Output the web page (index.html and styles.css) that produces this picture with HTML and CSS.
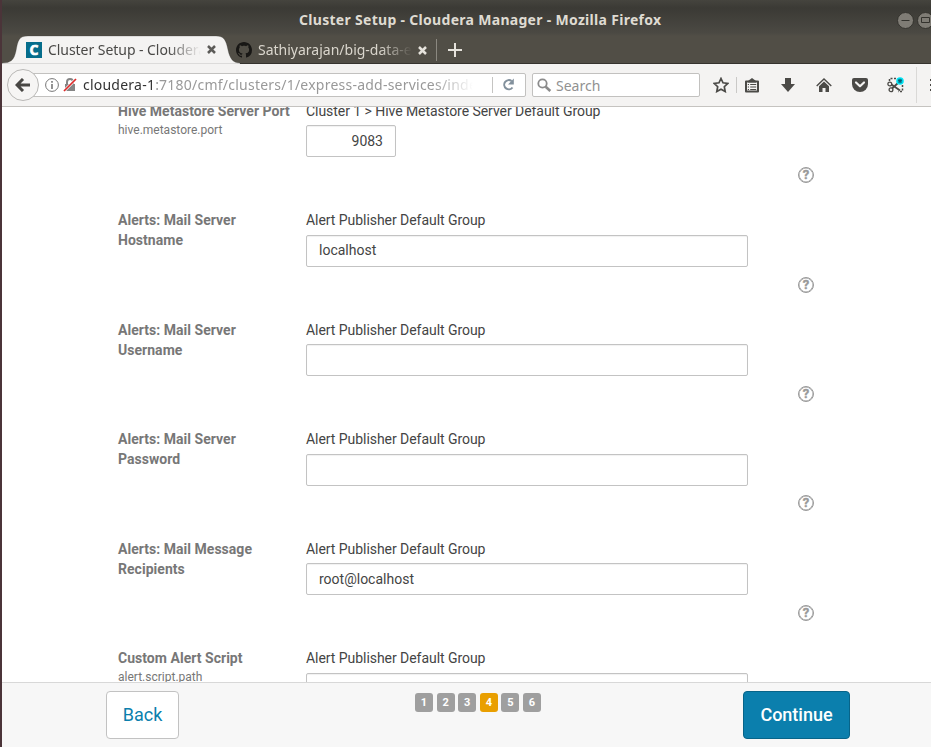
FILE: index.html
```html
<!DOCTYPE html>
<html lang="en">
<head>
<meta charset="utf-8">
<title>Cluster Setup - Cloudera Manager</title>
<link rel="stylesheet" href="styles.css">
</head>
<body>
<div class="window">
  <header class="chrome">
    <div class="titlebar">
      <span class="title">Cluster Setup - Cloudera Manager - Mozilla Firefox</span>
      <div class="controls">
        <svg width="17" height="17" viewBox="0 0 17 17"><circle cx="8.5" cy="8.5" r="8" fill="#7f7c75" stroke="#34332e"/><path d="M4.500 8.500h8" stroke="#34332e"/></svg>
        <svg width="17" height="17" viewBox="0 0 17 17"><circle cx="8.5" cy="8.5" r="8" fill="#7f7c75" stroke="#34332e"/><path d="M4.500 5.500h8v5h-8z" fill="none" stroke="#34332e"/></svg>
      </div>
    </div>
    <div class="tabs">
      <div class="tab active">
        <svg class="tab-shape" width="240" height="29" viewBox="0 0 240 29"><path d="M0 28C9 28 12 25 14 16C16 5 17 1 26 1H214C222 1 224 5 226 15C228 24 231 28 238 28V29H0Z" fill="#f4f3f2" stroke="#2e2d29" stroke-opacity=".4" stroke-width=".6"/></svg>
        <span class="favicon">C</span>
        <span class="tab-label first">Cluster Setup - Cloudera</span>
        <svg class="close" width="9" height="9" viewBox="0 0 9 9"><path d="M1 1l7 7M8 1l-7 7" stroke="#5c5b58" stroke-width="2.500"/></svg>
      </div>
      <div class="tab inactive">
        <svg width="16" height="16" viewBox="0 0 16 16"><path fill="#181715" d="M8 0C3.58 0 0 3.58 0 8c0 3.54 2.29 6.53 5.47 7.59.4.07.55-.17.55-.38 0-.19-.01-.82-.01-1.49-2.01.37-2.53-.49-2.69-.94-.09-.23-.48-.94-.82-1.13-.28-.15-.68-.52-.01-.53.63-.01 1.08.58 1.23.82.72 1.21 1.87.87 2.33.66.07-.52.28-.87.51-1.07-1.78-.2-3.64-.89-3.64-3.95 0-.87.31-1.59.82-2.15-.08-.2-.36-1.02.08-2.12 0 0 .67-.21 2.2.82.64-.18 1.32-.27 2-.27s1.36.09 2 .27c1.53-1.04 2.2-.82 2.2-.82.44 1.1.16 1.92.08 2.12.51.56.82 1.27.82 2.15 0 3.07-1.87 3.75-3.65 3.95.29.25.54.73.54 1.48 0 1.07-.01 1.93-.01 2.2 0 .21.15.46.55.38A8.01 8.01 0 0 0 16 8c0-4.42-3.58-8-8-8z"/></svg>
        <span class="tab-label second">Sathiyarajan/big-data-e</span>
        <svg class="close" width="9" height="9" viewBox="0 0 9 9"><path d="M1 1l7 7M8 1l-7 7" stroke="#e6e3dc" stroke-width="2.500"/></svg>
      </div>
      <svg class="new-tab" width="14" height="14" viewBox="0 0 14 14"><path d="M7 0v14M0 7h14" stroke="#e6e3dc" stroke-width="2"/></svg>
    </div>
    <div class="toolbar">
      <div class="back-circle"><svg width="16" height="14" viewBox="0 0 16 14"><path d="M15 7H3M8 1L2 7l6 6" fill="none" stroke="#484744" stroke-width="3"/></svg></div>
      <div class="url">
        <svg width="14" height="14" viewBox="0 0 14 14"><circle cx="7" cy="7" r="6.400" fill="none" stroke="#777"/><path d="M7 6v5M7 3v1.700" stroke="#777" stroke-width="1.600"/></svg>
        <svg class="lock" width="14" height="14" viewBox="0 0 14 14"><path d="M4 7V4a3 3 0 0 1 6 0v3" fill="none" stroke="#858585" stroke-width="2"/><path d="M2 6h10v7H2z" fill="#858585"/><path d="M1 13L13 1" stroke="#fff" stroke-width="3"/><path d="M1 13L13 1" stroke="#dc2b2b" stroke-width="1.700"/></svg>
        <span class="address"><b>cloudera-1</b>:7180/cmf/clusters/1/express-add-services/index</span>
        <span class="reload"><svg width="13" height="13" viewBox="0 0 13 13"><path d="M10.500 9.500A4.600 4.600 0 1 1 9.600 3" fill="none" stroke="#82909c" stroke-width="2"/><path d="M11.800.6v5.800H6z" fill="#82909c"/></svg></span>
      </div>
      <div class="search">
        <svg width="15" height="15" viewBox="0 0 15 15"><circle cx="5.500" cy="5.500" r="4.200" fill="none" stroke="#8b8b8b" stroke-width="1.800"/><path d="M8.700 8.700l4.600 4.300" stroke="#8b8b8b" stroke-width="2.600"/></svg>
        <span>Search</span>
      </div>
      <div class="tools">
        <svg width="16" height="16" viewBox="0 0 16 16"><path d="M8 1.500l2 4.300 4.800.6-3.500 3.300.9 4.800L8 12.200l-4.200 2.300.9-4.800L1.200 6.400l4.800-.6z" fill="none" stroke="#4b4a47" stroke-width="1.700"/></svg>
        <i class="tool-line"></i>
        <svg width="14" height="15" viewBox="0 0 14 15"><path d="M1 3.500h12v10H1z" fill="none" stroke="#4b4a47" stroke-width="2" stroke-linejoin="round"/><path d="M3 3L7 0l4 3v1.500H3z" fill="#4b4a47"/><path d="M2.800 6.500h1.200M5.200 6.500H11.200M2.800 9h1.200M5.200 9H11.200M2.800 11.500h1.200M5.200 11.500H11.200" stroke="#4b4a47" stroke-width="1.100"/></svg>
        <svg class="download" width="14" height="14" viewBox="0 0 14 14"><path d="M4 0h6v6h4l-7 8-7-8h4z" fill="#4b4a47"/></svg>
        <svg class="home" width="16" height="15" viewBox="0 0 16 15"><path d="M.7 8L8 1l7.300 7" fill="none" stroke="#4b4a47" stroke-width="1.400"/><path d="M3 8.200l5-4.700 5 4.700V14H9.500v-4h-3v4H3z" fill="#4b4a47"/></svg>
        <svg class="pocket" width="16" height="14" viewBox="0 0 16 14"><path d="M2 0h12q2 0 2 2v4a8 8 0 0 1-16 0V2q0-2 2-2z" fill="#4b4a47"/><path d="M4 4.500l4 3.700 4-3.700" fill="none" stroke="#f4f3f2" stroke-width="2.200" stroke-linecap="round" stroke-linejoin="round"/></svg>
        <svg class="scissors" width="17" height="16" viewBox="0 0 17 16"><path d="M2.500 4V1.500H10M15.500 8v6.500H11" fill="none" stroke="#4b4a47" stroke-width="1.500" stroke-dasharray="2 1.500"/><circle cx="2.800" cy="7" r="1.900" fill="none" stroke="#4b4a47" stroke-width="1.300"/><circle cx="4" cy="12.800" r="1.900" fill="none" stroke="#4b4a47" stroke-width="1.300"/><path d="M4.500 7.600L13 13.500M5 11.500L11 6" stroke="#4b4a47" stroke-width="1.800"/><circle cx="13" cy="4" r="3.800" fill="#00e5f5"/><path d="M13 1.700v4.600M11 2.900l4 2.200M15 2.900l-4 2.200" stroke="#075b70" stroke-width="1.200"/></svg>
        <i class="end-line"></i>
        <svg class="menu" width="14" height="14" viewBox="0 0 14 14"><path d="M0 2h14M0 7h14M0 12h14" stroke="#4b4a47" stroke-width="2"/></svg>
      </div>
    </div>
  </header>
  <main class="content">
    <section class="row">
      <div class="name"><strong>Hive Metastore Server Port</strong><small>hive.metastore.port</small></div>
      <div class="field"><label>Cluster 1 &gt; Hive Metastore Server Default Group</label><div class="input port">9083</div></div>
      <span class="help">?</span>
    </section>
    <section class="row">
      <div class="name"><strong>Alerts: Mail Server Hostname</strong></div>
      <div class="field"><label>Alert Publisher Default Group</label><div class="input">localhost</div></div>
      <span class="help">?</span>
    </section>
    <section class="row">
      <div class="name"><strong>Alerts: Mail Server Username</strong></div>
      <div class="field"><label>Alert Publisher Default Group</label><div class="input"></div></div>
      <span class="help">?</span>
    </section>
    <section class="row">
      <div class="name"><strong>Alerts: Mail Server Password</strong></div>
      <div class="field"><label>Alert Publisher Default Group</label><div class="input"></div></div>
      <span class="help">?</span>
    </section>
    <section class="row">
      <div class="name"><strong>Alerts: Mail Message Recipients</strong></div>
      <div class="field"><label>Alert Publisher Default Group</label><div class="input recipients">root@localhost</div></div>
      <span class="help">?</span>
    </section>
    <section class="row">
      <div class="name"><strong>Custom Alert Script</strong><small>alert.script.path</small></div>
      <div class="field"><label>Alert Publisher Default Group</label><div class="input"></div></div>
    </section>
  </main>
  <footer class="footer">
    <div class="button back">Back</div>
    <div class="steps"><span>1</span><span>2</span><span>3</span><span class="current">4</span><span>5</span><span>6</span></div>
    <div class="button continue">Continue</div>
  </footer>
</div>
</body>
</html>
```
FILE: styles.css
```css
* { box-sizing: border-box; }
body { margin: 0; background: #fff; font-family: Roboto, sans-serif; }
svg { display: block; flex: none; }
.window { width: 931px; height: 747px; display: flex; flex-direction: column; border-left: 2px solid #4b3439; overflow: hidden; }

.chrome { flex: none; height: 107px; background: linear-gradient(#45443e 0, #3b3a35 8px, #4b4943 33px, #514e46 36px); font-family: "Noto Sans", sans-serif; }
.titlebar { height: 35px; display: flex; align-items: center; padding: 5px 0 0 297px; }
.title { width: 364px; white-space: nowrap; font-size: 14px; line-height: 20px; font-weight: 700; letter-spacing: .3px; color: #dfdbd2; }
.controls { display: flex; gap: 3px; margin-left: 236px; flex: none; }

.tabs { height: 29px; display: flex; border-bottom: 1px solid #35332e; }
.tab { display: flex; align-items: center; flex: none; height: 29px; }
.active { width: 234px; padding-left: 24px; position: relative; }
.tab-shape { position: absolute; left: 0; top: 0; }
.active > :not(.tab-shape) { position: relative; }
.favicon { width: 16px; height: 16px; background: #066d8b; color: #fff; font: 700 14px/16px "Open Sans", sans-serif; text-align: center; -webkit-text-stroke: .7px #fff; }
.tab-label { overflow: hidden; white-space: nowrap; font-size: 14px; line-height: 20px; }
.first { width: 153px; margin-left: 6px; color: #4a4947; letter-spacing: -.05px; -webkit-mask-image: linear-gradient(90deg, #000 120px, transparent); mask-image: linear-gradient(90deg, #000 120px, transparent); }
.second { width: 154px; margin-left: 6px; color: #dad6cd; -webkit-mask-image: linear-gradient(90deg, #000 122px, transparent); mask-image: linear-gradient(90deg, #000 122px, transparent); }
.close { margin-left: 6px; }
.inactive { width: 201px; height: 22px; margin-top: 4px; border-right: 1px solid #8b8880; }
.new-tab { margin: 8px 0 0 11px; }

.toolbar { height: 43px; display: flex; align-items: center; background: #f4f3f2; border-bottom: 1px solid #c5c3c0; padding-left: 5px; }
.back-circle { z-index: 1; width: 32px; height: 32px; flex: none; border: 1px solid #b9b8b6; border-radius: 50%; background: #f6f5f4; display: flex; align-items: center; justify-content: center; }
.url { width: 494px; height: 24px; margin-left: -7px; padding-left: 12px; display: flex; align-items: center; flex: none; border: 1px solid #c2c1bf; border-radius: 2px; background: #fff; }
.lock { margin-left: 4px; }
.address { width: 398px; margin-left: 6px; overflow: hidden; white-space: nowrap; font-size: 14px; line-height: 20px; color: #999; letter-spacing: .23px; -webkit-mask-image: linear-gradient(90deg, #000 350px, transparent 390px); mask-image: linear-gradient(90deg, #000 350px, transparent 390px); }
.address b { font-weight: 400; color: #333; }
.reload { margin-left: 11px; height: 16px; border-left: 1px solid #c5c4c2; padding: 1px 0 0 9px; }
.search { width: 168px; height: 24px; margin-left: 6px; padding-left: 4px; display: flex; align-items: center; gap: 4px; flex: none; border: 1px solid #c2c1bf; border-radius: 2px; background: #fff; font-size: 14px; color: #919191; }
.tools { display: flex; align-items: center; flex: none; margin-left: 13px; }
.tool-line { width: 1px; height: 16px; background: #cac9c7; margin: 0 8px 0 7px; }
.download { margin-left: 22px; }
.home { margin-left: 21px; }
.pocket { margin-left: 20px; }
.scissors { margin-left: 19px; }
.end-line { width: 1px; height: 36px; background: #dad9d7; margin-left: 12px; }
.menu { margin-left: 13px; }

.content { height: 575px; flex: none; overflow: hidden; padding-left: 116px; }
.row { height: 109.4px; display: grid; grid-template-columns: 188px 442px 16px; position: relative; top: -6px; }
.name { width: 180px; font-size: 14px; line-height: 20px; color: #777; }
.name strong { display: block; max-width: 176px; font-weight: 700; letter-spacing: .03px; }
.row:not(:first-child) .name strong { max-width: 140px; }
.name small { display: block; font-size: 12px; line-height: 18px; }
.row:last-child .name small { padding-top: .5px; }
.field { font-size: 14px; line-height: 20px; color: #444; letter-spacing: -.05px; }
.field label { display: block; }
.input { height: 32px; margin-top: 4.55px; padding: 4px 12px; border: 1px solid #c3c3c3; border-radius: 2px; line-height: 21px; letter-spacing: 0; box-shadow: inset 0 1px 1px rgba(0,0,0,.06); }
.port { width: 90px; margin-top: 4px; padding-top: 5px; text-align: right; }
.recipients { padding-top: 5px; }
.help { width: 16px; height: 16px; margin: 66.2px 0 0 50px; border: 1.5px solid #999; border-radius: 50%; color: #999; text-align: center; font-size: 13px; line-height: 14.5px; font-weight: 700; -webkit-text-stroke: .4px #999; box-shadow: inset 0 0 0 .5px #999; }

.footer { flex: 1; display: flex; align-items: flex-start; padding: 8px 0 0 104px; border-top: 1px solid #d8d8d8; background: #f7f7f7; }
.button { height: 48px; line-height: 46px; text-align: center; font-size: 18px; border-radius: 4px; }
.back { width: 73px; background: #fff; border: 1px solid #c2c2c2; color: #0b7fad; }
.steps { display: flex; gap: 3.6px; margin: 2px 0 0 236px; width: 328px; }
.steps span { width: 18px; height: 19px; border-radius: 3px; background: #9f9f9f; color: #fff; text-align: center; font-size: 11px; font-weight: 700; line-height: 19px; }
.steps .current { background: #e99f00; }
.continue { width: 107px; background: #0b7fad; border: 1px solid #076489; color: #fff; font-weight: 500; }
```
